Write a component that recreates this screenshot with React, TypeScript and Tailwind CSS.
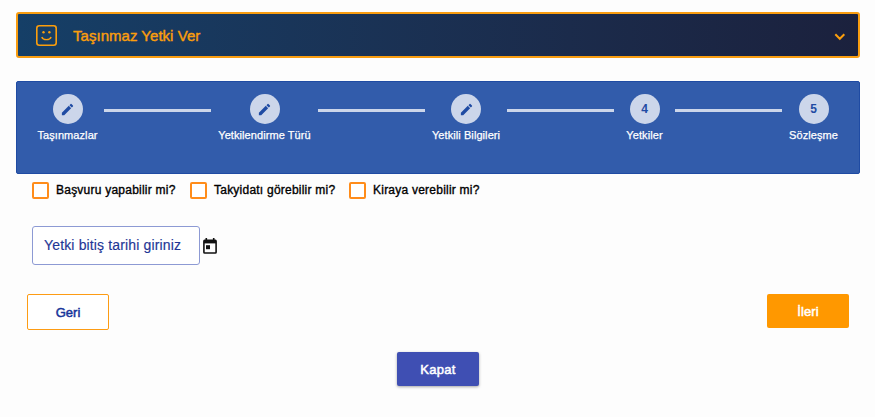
import { Fragment } from "react";
import { MdEdit } from "react-icons/md";

const steps = [
  { label: "Taşınmazlar", done: true, width: "w-[59px]" },
  { label: "Yetkilendirme Türü", done: true, width: "w-[93px]" },
  { label: "Yetkili Bilgileri", done: true, width: "w-[68px]" },
  { label: "Yetkiler", done: false, width: "w-[47px]" },
  { label: "Sözleşme", done: false, width: "w-[49px]" },
];

const permissions = [
  { label: "Başvuru yapabilir mi?", text: "w-[120px]" },
  { label: "Takyidatı görebilir mi?", text: "w-[121px]" },
  { label: "Kiraya verebilir mi?", text: "w-[110px]" },
];

function SmileIcon() {
  return (
    <svg width="21" height="21" viewBox="0 0 21 21" fill="none" stroke="#fb9e0c">
      <rect x="0.8" y="0.8" width="19.4" height="19.4" rx="2.5" strokeWidth="1.6" />
      <path d="M5.8 11.9c1.3 3.6 8 3.6 9.3 0" strokeWidth="1.4" />
      <circle cx="7.5" cy="7.3" r="1.2" fill="#fb9e0c" stroke="none" />
      <circle cx="13.4" cy="7.3" r="1.2" fill="#fb9e0c" stroke="none" />
    </svg>
  );
}

function ChevronIcon() {
  return (
    <svg width="12" height="8" viewBox="0 0 12 8" fill="none" stroke="#fb9e0c" strokeWidth="2">
      <path d="M1.3 1.2 5.8 5.8l4.5-4.6" />
    </svg>
  );
}

function CalendarIcon() {
  return (
    <svg width="14" height="16" viewBox="0 0 14 16" fill="none" stroke="#111">
      <rect x="0.9" y="2.4" width="12.2" height="12.6" rx="0.8" strokeWidth="1.6" />
      <path d="M1 3.9h12" strokeWidth="3" />
      <path d="M3.3 0v3M10.7 0v3" strokeWidth="1.6" />
      <rect x="3" y="7.2" width="4" height="4" fill="#111" stroke="none" />
    </svg>
  );
}

function Header() {
  return (
    <header className="flex h-[46px] items-center rounded-[3px] border-2 border-[#f99d10] bg-linear-to-r from-[#153f67] to-[#1b213d] pl-[18px] pr-3">
      <SmileIcon />
      <h1 className="ml-4 mt-px flex-1 whitespace-nowrap text-[15px] leading-5 tracking-[0.03px] text-[#fb9e0c] [-webkit-text-stroke:0.4px]">
        Taşınmaz Yetki Ver
      </h1>
      <div className="mt-1">
        <ChevronIcon />
      </div>
    </header>
  );
}

function Stepper() {
  return (
    <nav className="mt-[23px] flex h-[93px] rounded-[2px] border border-[#1f4ba3] bg-[#325cab] px-[21px] pt-3">
      {steps.map((step, index) => (
        <Fragment key={step.label}>
          {index > 0 && <div className="mx-[7px] mt-[15px] h-[3px] w-[107px] shrink-0 bg-[#ccd6ea]" />}
          <div className={`flex shrink-0 flex-col items-center ${step.width}`}>
            <div className="flex size-[30px] items-center justify-center rounded-full bg-[#ccd6ea] text-[#1f4ba3]">
              {step.done ? (
                <MdEdit className="size-[15px]" />
              ) : (
                <span className="text-xs font-bold">{index + 1}</span>
              )}
            </div>
            <span className="mt-1 whitespace-nowrap text-[11px] leading-[14px] tracking-[0.08px] text-white [-webkit-text-stroke:0.25px]">
              {step.label}
            </span>
          </div>
        </Fragment>
      ))}
    </nav>
  );
}

export default function App() {
  return (
    <main className="h-[417px] w-[875px] bg-[#fdfdfd] pl-4 pr-[15px] pt-3 font-['Liberation_Sans',Arial,sans-serif]">
      <Header />
      <Stepper />

      <div className="ml-4 mt-2 flex gap-[14px]">
        {permissions.map((permission) => (
          <label key={permission.label} className="flex items-center gap-[7px]">
            <span className="size-[17px] rounded-[2px] border-2 border-[#ff8c1a] bg-white" />
            <span
              className={`whitespace-nowrap text-xs leading-[17px] tracking-[0.23px] text-black [-webkit-text-stroke:0.35px] ${permission.text}`}
            >
              {permission.label}
            </span>
          </label>
        ))}
      </div>

      <div className="ml-4 mt-[27px] flex items-center gap-[3px]">
        <div className="flex h-[39px] w-[168px] items-center whitespace-nowrap rounded-[3px] border border-[#8d9ad4] bg-white pb-px pl-[11px] text-sm tracking-[0.15px] text-[#1e3796] [-webkit-text-stroke:0.15px]">
          Yetki bitiş tarihi giriniz
        </div>
        <CalendarIcon />
      </div>

      <div className="ml-[11px] mr-[11px] mt-[29px] flex items-start justify-between">
        <button className="h-9 w-[82px] rounded-[2px] border border-[#fd9c14] bg-white pt-px text-[13px] text-[#16349a] [-webkit-text-stroke:0.5px]">
          Geri
        </button>
        <button className="h-[34px] w-[82px] rounded-[2px] bg-[#ff9800] pt-px text-[13px] tracking-[0.1px] text-white [-webkit-text-stroke:0.5px]">
          İleri
        </button>
      </div>

      <div className="mt-[22px] flex justify-center">
        <button className="h-[34px] w-[82px] rounded-[2px] bg-[#3f4fb3] pt-px text-[13px] tracking-[0.3px] text-white shadow-[0_1px_3px_rgba(0,0,0,0.35)] [-webkit-text-stroke:0.5px]">
          Kapat
        </button>
      </div>
    </main>
  );
}
